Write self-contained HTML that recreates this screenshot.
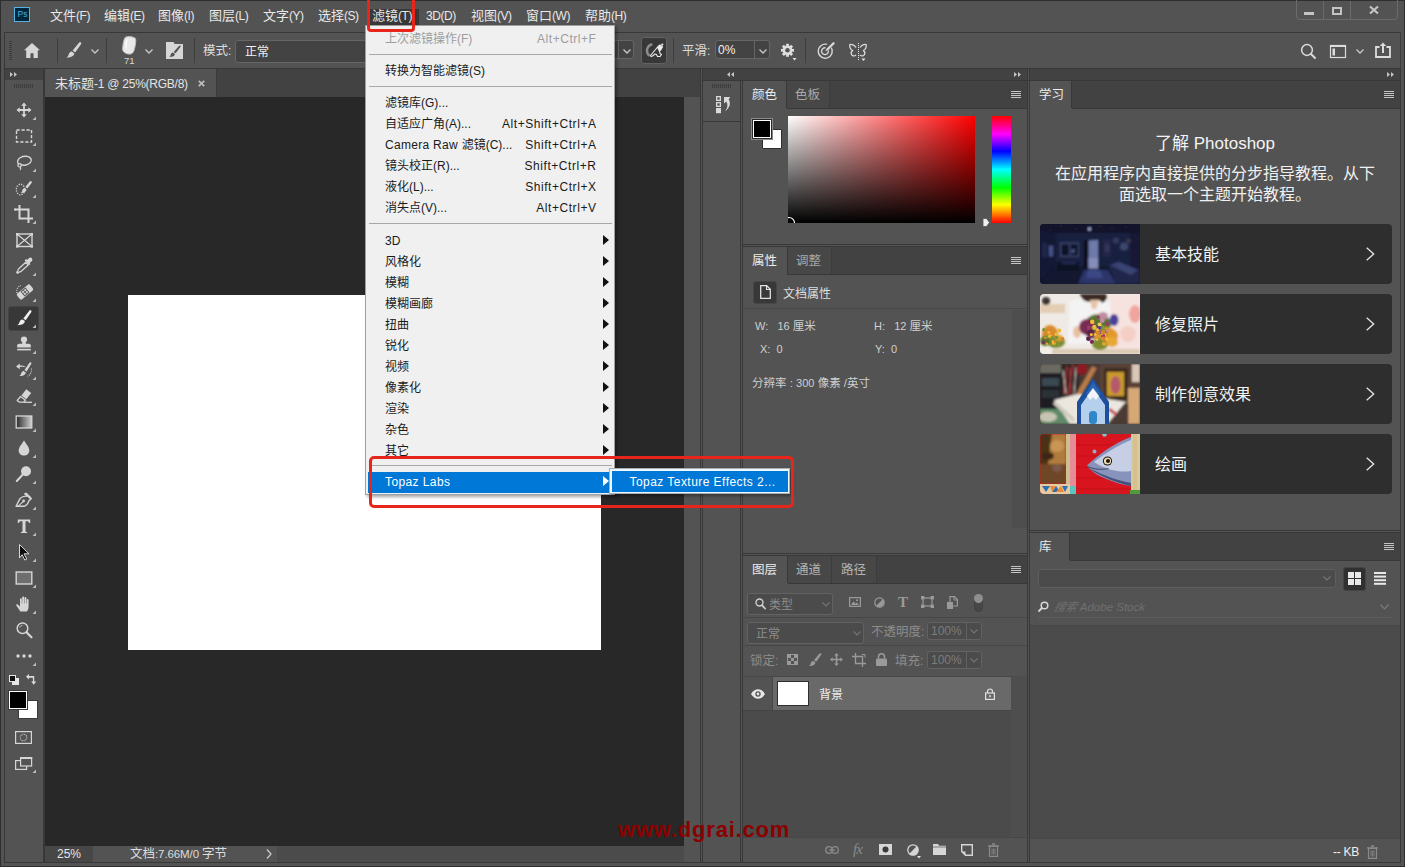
<!DOCTYPE html>
<html lang="zh-CN">
<head>
<meta charset="utf-8">
<title>Photoshop</title>
<style>
*{box-sizing:border-box;margin:0;padding:0}
html,body{width:1405px;height:867px;overflow:hidden;background:#535353}
body{position:relative;font-family:"Liberation Sans","Noto Sans CJK SC",sans-serif;font-size:12px;color:#dcdcdc;line-height:1}
.a{position:absolute}
.t{position:absolute;white-space:nowrap}
svg{position:absolute;overflow:visible}
/* frame */
#frame{left:0;top:0;width:1405px;height:867px;background:#535353;border:1px solid #2e2e2e}
#menubar{left:1px;top:1px;width:1403px;height:31px;background:#535353}
#optline{left:4px;top:32px;width:1397px;height:1px;background:#383838}
#optbar{left:4px;top:33px;width:1397px;height:36px;background:#535353;border-left:1px solid #383838;border-right:1px solid #3f3f3f;border-bottom:1px solid #383838}
.sep{position:absolute;top:38px;width:1px;height:25px;background:#3e3e3e}
.chev{stroke:#c8c8c8;stroke-width:1.3;fill:none}
.ic{fill:#d6d6d6}
.dd{position:absolute;background:#434343;border:1px solid #666;border-radius:3px}
.mi{position:absolute;top:8px;font-size:13px;line-height:15px;color:#e8e8e8;white-space:nowrap}
.mi .l{font-size:12px;letter-spacing:-0.45px}
/* left toolbar */
#tools{left:5px;top:69px;width:38px;height:793px;background:#535353}
#toolshead{left:5px;top:69px;width:38px;height:11px;background:#424242}
/* doc area */
#tabstrip{left:45px;top:69px;width:655px;height:29px;background:#424242}
#doctab{left:45px;top:69px;width:171px;height:29px;background:#535353}
#canvas{left:45px;top:97px;width:639px;height:749px;background:#282828}
#vscroll{left:684px;top:97px;width:16px;height:749px;background:#535353}
#doc{left:128px;top:295px;width:473px;height:355px;background:#fff}
#status{left:45px;top:846px;width:655px;height:16px;background:#4b4b4b}
/* panels */
.phead{position:absolute;background:#424242}
.ptab{position:absolute;background:#535353;color:#e8e8e8;font-size:13px}
.panel{position:absolute;background:#535353}
#fmenu .mt{position:absolute;left:19px;font-size:12px;line-height:16px;white-space:nowrap}
#fmenu .ms{position:absolute;right:17.5px;font-size:12px;line-height:16px;white-space:nowrap;letter-spacing:.55px}
#fmenu .l{font-size:12px}
</style>
</head>
<body>
<div class="a" id="frame"></div>
<div class="a" id="menubar"></div>
<div class="a" id="optline"></div>
<div class="a" id="optbar"></div>
<div class="a" id="tools"></div>
<div class="a" id="toolshead"></div>
<div class="a" id="tabstrip"></div>
<div class="a" id="doctab"></div>
<div class="a" id="canvas"></div>
<div class="a" id="vscroll"></div>
<div class="a" id="doc"></div>
<div class="a" id="status"></div>
<!--MENUBAR-->
<div class="a" style="left:14px;top:7px;width:16px;height:15px;background:#00263c;border:1px solid #55b4e4"></div>
<div class="t" style="left:17.500px;top:10px;font-size:8.500px;line-height:9px;color:#45aee6;letter-spacing:0">Ps</div>
<div class="a" style="left:370px;top:9px;width:49px;height:16px;background:#383838"></div>
<div class="mi" style="left:50px">文件<span class="l">(F)</span></div>
<div class="mi" style="left:104px">编辑<span class="l">(E)</span></div>
<div class="mi" style="left:158px">图像<span class="l">(I)</span></div>
<div class="mi" style="left:209px">图层<span class="l">(L)</span></div>
<div class="mi" style="left:263px">文字<span class="l">(Y)</span></div>
<div class="mi" style="left:318px">选择<span class="l">(S)</span></div>
<div class="mi" style="left:372px">滤镜<span class="l">(T)</span></div>
<div class="mi" style="left:426px"><span class="l">3D(D)</span></div>
<div class="mi" style="left:471px">视图<span class="l">(V)</span></div>
<div class="mi" style="left:526px">窗口<span class="l">(W)</span></div>
<div class="mi" style="left:585px">帮助<span class="l">(H)</span></div>
<div class="a" style="left:1296px;top:-4px;width:102px;height:24px;border:1px solid #6b6b6b;border-radius:4px"></div>
<div class="a" style="left:1323px;top:1px;width:1px;height:18px;background:#6b6b6b"></div>
<div class="a" style="left:1350px;top:1px;width:1px;height:18px;background:#6b6b6b"></div>
<div class="a" style="left:1304px;top:12px;width:10px;height:3px;background:#c4c4c4"></div>
<div class="a" style="left:1332px;top:7px;width:10px;height:8px;border:2px solid #c4c4c4"></div>
<svg style="left:1369px;top:6px" width="10" height="8" viewBox="0 0 10 8"><path d="M1 0.5L9 7.5M9 0.5L1 7.5" stroke="#c4c4c4" stroke-width="2.2" fill="none"/></svg>
<!--OPTBAR-->
<div class="a" style="left:9px;top:41px;width:3px;height:20px;background:repeating-linear-gradient(to bottom,#3c3c3c 0 1px,transparent 1px 2px)"></div>
<svg style="left:24px;top:43px" width="16" height="15" viewBox="0 0 16 15"><path class="ic" d="M8 0L0 7.2h2.2V15h4.3v-4.8h3V15h4.3V7.2H16z"/></svg>
<div class="sep" style="left:57px"></div>
<svg style="left:66px;top:42px" width="16" height="16" viewBox="0 0 16 16"><path class="ic" d="M14.6 0.3c0.8 0.5 0.9 1.2 0.4 2L9.2 10.4 6.6 8.6 13 0.7c0.5-0.6 1-0.8 1.6-0.4zM5.7 9.5l2.6 1.8c-0.3 2.6-2.6 4.3-7.9 4.2 1.6-0.8 1.9-1.6 2.3-3.2 0.4-1.5 1.5-2.6 3-2.8z"/></svg>
<svg style="left:91px;top:49px" width="8" height="5" viewBox="0 0 8 5"><path class="chev" d="M0.5 0.5L4 4l3.5-3.5"/></svg>
<div class="sep" style="left:106px"></div>
<svg style="left:120px;top:36px" width="17" height="19" viewBox="0 0 17 19"><path d="M5.5 1.2C8 0 13 0.6 15.2 2.2c1.2 1 0.3 7.8-1.2 12.3-0.8 2.5-2.6 3.8-5 3.6-3.6-0.3-6.6-2.6-6.4-5.2C2.9 9 3.6 3 5.5 1.2z" fill="#e9e9e9" stroke="#bdbdbd" stroke-width="1"/><path d="M7 3.5c-0.8 3-1.3 6-1.2 9" stroke="#fff" stroke-width="1.5" fill="none" opacity=".8"/></svg>
<div class="t" style="left:124px;top:56px;font-size:9.5px;color:#d8d8d8">71</div>
<svg style="left:145px;top:49px" width="8" height="5" viewBox="0 0 8 5"><path class="chev" d="M0.5 0.5L4 4l3.5-3.5"/></svg>
<svg style="left:166px;top:42px" width="17" height="17" viewBox="0 0 17 17"><path class="ic" d="M0 0h7.5l1.2 2H17v15H0z"/><path d="M14.2 3.6c0.6 0.4 0.6 0.9 0.2 1.5L9.6 11.2 7.7 9.9 12.9 4c0.4-0.5 0.8-0.7 1.3-0.4zM7 10.6l1.9 1.3c-0.3 1.9-2 3-5.8 2.9 1.2-0.5 1.4-1.1 1.7-2.2 0.3-1.1 1.1-1.8 2.2-2z" fill="#535353"/></svg>
<div class="sep" style="left:194px"></div>
<div class="t" style="left:203px;top:44px;font-size:12.500px;line-height:15px;color:#dcdcdc">模式<span style="font-size:12px">:</span></div>
<div class="dd" style="left:235px;top:40px;width:150px;height:23px"></div>
<div class="t" style="left:245px;top:45px;font-size:12px;line-height:14px;color:#f0f0f0">正常</div>
<div class="dd" style="left:600px;top:40px;width:34px;height:19px"></div>
<div class="a" style="left:618px;top:41px;width:1px;height:17px;background:#666"></div>
<svg style="left:623px;top:49px" width="8" height="5" viewBox="0 0 8 5"><path class="chev" d="M0.5 0.5L4 4l3.5-3.5"/></svg>
<div class="a" style="left:641px;top:37px;width:26px;height:27px;background:#383838;border:1px solid #626262;border-radius:3px"></div>
<svg style="left:645px;top:42px" width="19" height="17" viewBox="0 0 19 17"><path d="M7.300 2.300C1.800 3.800 0 10 4.600 13.800" stroke="#8c8c8c" stroke-width="2.500" fill="none"/><path d="M5.500 13.500L13 4.500 15 3l2.500 2-1.500 2.500L14.500 9l0.500 2.500 1.500 1-1.500 2h-2.500l-1-2L10 12l-2.500 2-1.500 0.500z" fill="#383838" stroke="#ececec" stroke-width="1.100" stroke-linejoin="round"/><path d="M12 5.500L15 3l2.500 2L16 7.500 14 9.500z" fill="#ececec"/><circle cx="17.300" cy="2.600" r="1.100" fill="#ececec"/></svg>
<div class="sep" style="left:673px"></div>
<div class="t" style="left:682px;top:44px;font-size:12.500px;line-height:15px;color:#dcdcdc">平滑<span style="font-size:12px">:</span></div>
<div class="dd" style="left:715px;top:40px;width:55px;height:19px"></div>
<div class="a" style="left:754px;top:41px;width:1px;height:17px;background:#666"></div>
<div class="t" style="left:718px;top:43px;font-size:12px;line-height:14px;color:#f0f0f0">0%</div>
<svg style="left:759px;top:49px" width="8" height="5" viewBox="0 0 8 5"><path class="chev" d="M0.5 0.5L4 4l3.5-3.5"/></svg>
<svg style="left:780px;top:43px" width="17" height="18" viewBox="0 0 17 18"><g transform="translate(7.500 7.300) scale(.93)"><g fill="#dedede"><rect x="-1.5" y="-7" width="3" height="14"/><rect x="-1.5" y="-7" width="3" height="14" transform="rotate(45)"/><rect x="-1.5" y="-7" width="3" height="14" transform="rotate(90)"/><rect x="-1.5" y="-7" width="3" height="14" transform="rotate(135)"/><circle r="5.2"/></g><circle r="2.4" fill="#535353"/></g><path d="M12.5 15h4l-2 2.5z" fill="#e6e6e6"/></svg>
<div class="sep" style="left:805px"></div>
<svg style="left:817px;top:41px" width="19" height="18" viewBox="0 0 19 18"><g fill="none" stroke="#d8d8d8" stroke-width="1.4"><path d="M14.2 6.4A7 7 0 1 1 10 3.4"/><path d="M11 8.6A3.4 3.4 0 1 1 8.4 6.8"/></g><path d="M8 10.5l1-2.6 6.6-6.6c0.6-0.6 1.4-0.5 1.9 0s0.6 1.3 0 1.9L10.9 9.8z" fill="#d8d8d8" stroke="#535353" stroke-width=".6"/></svg>
<svg style="left:849px;top:43px" width="18" height="18" viewBox="0 0 18 18"><g fill="none" stroke="#d8d8d8" stroke-width="1.3" stroke-linejoin="round"><path d="M7 4.5C5.5 2 2.5 0.8 0.8 1.6 0.6 4 1.6 6.6 3.6 7.6 2.2 8.4 1.8 10 2.6 11.6c1 1.6 3.2 1.8 4.4 0.2"/><path d="M11 4.5c1.5-2.5 4.5-3.700 6.200-2.900 0.200 2.400-0.800 5-2.800 6 1.400 0.800 1.800 2.400 1 4-1 1.600-3.200 1.800-4.400 0.200"/></g><path d="M9.500 0v17" stroke="#e6e6e6" stroke-width="1" stroke-dasharray="1 1"/><path d="M12.500 15.500h4l-2 2.500z" fill="#e6e6e6"/></svg>
<svg style="left:1300px;top:43px" width="16" height="16" viewBox="0 0 16 16"><circle cx="7" cy="7" r="5.4" fill="none" stroke="#dcdcdc" stroke-width="1.5"/><path d="M11 11l4 4" stroke="#dcdcdc" stroke-width="2" stroke-linecap="round"/></svg>
<svg style="left:1330px;top:45px" width="16" height="13" viewBox="0 0 16 13"><rect x=".5" y=".5" width="15" height="12" fill="none" stroke="#dcdcdc" stroke-width="1.2"/><rect x="0" y="0" width="16" height="2" fill="#dcdcdc"/><rect x="2.500" y="3.500" width="2.500" height="7" fill="#dcdcdc"/></svg>
<svg style="left:1356px;top:49px" width="8" height="5" viewBox="0 0 8 5"><path class="chev" d="M0.5 0.5L4 4l3.5-3.5"/></svg>
<svg style="left:1375px;top:42px" width="16" height="16" viewBox="0 0 16 16"><path d="M4.500 5H1v10h14V5h-3.500" fill="none" stroke="#dcdcdc" stroke-width="1.800"/><path d="M8 11V2.500" stroke="#dcdcdc" stroke-width="2"/><path d="M4.800 4L8 0.400 11.200 4z" fill="#dcdcdc"/></svg>
<!--TOOLS-->
<div class="a" style="left:4px;top:69px;width:1px;height:794px;background:#383838"></div><div class="a" style="left:43px;top:69px;width:1px;height:794px;background:#383838"></div><div class="a" style="left:5px;top:862px;width:1396px;height:1px;background:#383838"></div>
<svg style="left:9px;top:71px" width="9" height="7" viewBox="0 0 9 7"><path d="M1 1L4 3.500 1 6zM5 1L8 3.500 5 6z" fill="#c4c4c4"/></svg>
<div class="a" style="left:14px;top:84px;width:19px;height:4px;background:repeating-linear-gradient(to right,#3c3c3c 0 1px,transparent 1px 2px)"></div>
<div class="a" style="left:8px;top:306px;width:31px;height:25px;background:#383838;border:1px solid #444;border-radius:3px"></div>
<svg style="left:14px;top:100px" width="20" height="20" viewBox="0 0 20 20"><path d="M10 2.5l2.800 3.200h-1.900v3.400h3.400v-1.900l3.200 2.800-3.200 2.800v-1.900h-3.400v3.400h1.900L10 17.500l-2.800-3.200h1.900v-3.400H5.700v1.900L2.500 10l3.200-2.800v1.900h3.400V5.700H7.200z" fill="#d6d6d6"/><path d="M22 16.500v3.500h-3.500z" fill="#bdbdbd"/></svg>
<svg style="left:14px;top:126px" width="20" height="20" viewBox="0 0 20 20"><rect x="2.500" y="4" width="15" height="12" fill="none" stroke="#d6d6d6" stroke-width="1.400" stroke-dasharray="3.200 1.800"/><path d="M22 16.500v3.500h-3.500z" fill="#bdbdbd"/></svg>
<svg style="left:14px;top:152px" width="20" height="20" viewBox="0 0 20 20"><path d="M5 12.500C2.800 11 3 7.500 6.500 5.500c3.500-2 8.500-1.500 10.300 1 1.700 2.500-0.800 5.800-5 6.500-1.800 0.300-3.600 0.200-5-0.300" fill="none" stroke="#d6d6d6" stroke-width="1.400"/><circle cx="5.600" cy="13.300" r="1.700" fill="none" stroke="#d6d6d6" stroke-width="1.200"/><path d="M6.300 14.800c0.600 1 0.600 2-0.300 3" fill="none" stroke="#d6d6d6" stroke-width="1.200"/><path d="M22 16.500v3.500h-3.500z" fill="#bdbdbd"/></svg>
<svg style="left:14px;top:178px" width="20" height="20" viewBox="0 0 20 20"><ellipse cx="6.500" cy="11.500" rx="4.200" ry="5.300" fill="none" stroke="#d6d6d6" stroke-width="1.300" stroke-dasharray="1.200 1.300"/><path d="M17.300 3.200c0.700 0.500 0.700 1.100 0.300 1.700l-4.300 5.700-2-1.500 4.500-5.600c0.400-0.500 0.900-0.700 1.500-0.300zM10.500 9.900l2 1.500c-0.300 2.200-2 3.700-6 3.600 1.300-0.700 1.500-1.300 1.800-2.600 0.300-1.300 1-2.200 2.200-2.500z" fill="#d6d6d6"/><path d="M22 16.500v3.500h-3.500z" fill="#bdbdbd"/></svg>
<svg style="left:14px;top:204px" width="20" height="20" viewBox="0 0 20 20"><path d="M5.500 1v13.500H19M1 5.500h13.500V19" fill="none" stroke="#d6d6d6" stroke-width="2"/><rect x="0" y="4.500" width="2" height="2" fill="#d6d6d6"/><path d="M22 16.500v3.500h-3.500z" fill="#bdbdbd"/></svg>
<svg style="left:14px;top:230px" width="20" height="20" viewBox="0 0 20 20"><rect x="3" y="4" width="15" height="12.500" fill="none" stroke="#d6d6d6" stroke-width="1.400"/><path d="M3 4l15 12.500M18 4L3 16.500" stroke="#d6d6d6" stroke-width="1.200"/><g fill="#d6d6d6"><rect x="2" y="3" width="2.400" height="2.400"/><rect x="16.600" y="3" width="2.400" height="2.400"/><rect x="2" y="15.200" width="2.400" height="2.400"/><rect x="16.600" y="15.200" width="2.400" height="2.400"/></g></svg>
<svg style="left:14px;top:256px" width="20" height="20" viewBox="0 0 20 20"><path d="M14.800 2.200c1.200-1 2.600-0.600 3.200 0.300 0.600 0.900 0.500 2-0.500 2.900l-1.900 1.600 0.900 1-1.500 1.300-4.400-5.100 1.500-1.300 0.900 1z" fill="#d6d6d6"/><path d="M11.800 6.300l2.400 2.800-6.700 5.900c-0.800 0.700-1.700 1.100-2.700 1.200l-1.200 1-0.900-1 1.100-1.100c0-1 0.400-2 1.200-2.700z" fill="none" stroke="#d6d6d6" stroke-width="1.300" stroke-linejoin="round"/><path d="M22 16.500v3.500h-3.500z" fill="#bdbdbd"/></svg>
<svg style="left:14px;top:282px" width="20" height="20" viewBox="0 0 20 20"><g transform="rotate(-40 11 10)"><rect x="2.500" y="6.200" width="17" height="7.600" rx="2" fill="#d6d6d6"/><rect x="7.800" y="6.800" width="6.400" height="6.400" fill="#535353"/><g fill="#d6d6d6"><rect x="8.700" y="7.700" width="1.900" height="1.900"/><rect x="11.400" y="7.700" width="1.900" height="1.900"/><rect x="8.700" y="10.400" width="1.900" height="1.900"/><rect x="11.400" y="10.400" width="1.900" height="1.900"/></g></g><path d="M3 11C2 8 3.500 4.500 7 3.500" fill="none" stroke="#d6d6d6" stroke-width="1.200" stroke-dasharray="1 1.200"/><path d="M22 16.500v3.500h-3.500z" fill="#bdbdbd"/></svg>
<svg style="left:14px;top:308px" width="20" height="20" viewBox="0 0 20 20"><path d="M16.800 2.300c0.800 0.500 0.900 1.200 0.400 2L11.700 12.200 9.300 10.500 15.300 2.700c0.400-0.600 0.900-0.800 1.500-0.400zM8.400 11.400l2.500 1.700c-0.300 2.500-2.500 4.200-7.600 4.100 1.600-0.800 1.800-1.600 2.200-3.100 0.400-1.500 1.400-2.500 2.900-2.700z" fill="#f0f0f0"/><path d="M22 16.500v3.500h-3.500z" fill="#bdbdbd"/></svg>
<svg style="left:14px;top:334px" width="20" height="20" viewBox="0 0 20 20"><path d="M10 2.500c1.900 0 3.200 1.300 3.200 2.900 0 1.200-0.800 2-1.300 2.800-0.400 0.700-0.300 1.400 0.300 1.600h2.600c1.200 0 2 0.700 2 1.800v1.900H3.200v-1.900c0-1.100 0.800-1.800 2-1.800h2.600c0.600-0.200 0.700-0.900 0.300-1.600-0.500-0.800-1.300-1.600-1.300-2.800 0-1.600 1.300-2.900 3.200-2.900z" fill="#d6d6d6"/><rect x="3.200" y="14.800" width="13.600" height="1.600" fill="#d6d6d6"/><path d="M22 16.500v3.500h-3.500z" fill="#bdbdbd"/></svg>
<svg style="left:14px;top:360px" width="20" height="20" viewBox="0 0 20 20"><path d="M16.800 2.300c0.700 0.500 0.800 1.100 0.400 1.800L12.600 11.600 10.500 10.100 15.500 2.700c0.400-0.500 0.800-0.700 1.300-0.400zM9.700 10.900l2.100 1.500c-0.300 2.200-2.100 3.600-6.400 3.500 1.300-0.700 1.500-1.400 1.800-2.600 0.300-1.300 1.200-2.200 2.500-2.400z" fill="#d6d6d6"/><path d="M2 6.500l3.800-3v2c2.500-0.200 4.800 0.500 6 1.800-2-0.800-4-0.800-6-0.400v2.400z" fill="#d6d6d6"/><path d="M17.300 8.500c0.700 3.300-0.800 6.400-3.800 7.800" fill="none" stroke="#d6d6d6" stroke-width="1.100" stroke-dasharray="1 1.200"/><path d="M22 16.500v3.500h-3.500z" fill="#bdbdbd"/></svg>
<svg style="left:14px;top:386px" width="20" height="20" viewBox="0 0 20 20"><path d="M12.300 3.300l4.900 3.700-4.900 6.300-4.900-3.700z" fill="#d6d6d6"/><path d="M6.600 10.500l4.900 3.700-1.700 2H5.500l-2.300-1.800z" fill="none" stroke="#d6d6d6" stroke-width="1.300" stroke-linejoin="round"/><path d="M9.500 16.300H18" stroke="#d6d6d6" stroke-width="1.300"/><path d="M22 16.500v3.500h-3.500z" fill="#bdbdbd"/></svg>
<svg style="left:14px;top:412px" width="20" height="20" viewBox="0 0 20 20"><defs><linearGradient id="tg" x1="0" x2="1"><stop offset="0" stop-color="#2a2a2a"/><stop offset="1" stop-color="#d0d0d0"/></linearGradient></defs><rect x="2.200" y="4" width="15.600" height="12" fill="url(#tg)" stroke="#d6d6d6" stroke-width="1.300"/><path d="M22 16.500v3.500h-3.500z" fill="#bdbdbd"/></svg>
<svg style="left:14px;top:438px" width="20" height="20" viewBox="0 0 20 20"><path d="M10 2.500c2.300 3.800 5.300 6.400 5.300 10 0 3-2.400 5-5.300 5s-5.300-2-5.300-5c0-3.600 3-6.200 5.300-10z" fill="#d6d6d6"/><path d="M22 16.500v3.500h-3.500z" fill="#bdbdbd"/></svg>
<svg style="left:14px;top:464px" width="20" height="20" viewBox="0 0 20 20"><circle cx="12" cy="7.200" r="5" fill="#d6d6d6"/><path d="M8.600 10.800L2.800 17" stroke="#d6d6d6" stroke-width="2" stroke-linecap="round"/><path d="M22 16.500v3.500h-3.500z" fill="#bdbdbd"/></svg>
<svg style="left:14px;top:490px" width="20" height="20" viewBox="0 0 20 20"><path d="M11.500 3.200l5.500 4.500-2 2.200c-0.400 3-1.500 5-4 6.300L3 17.300 5.800 9.200c1.500-2.200 3.400-3.200 6.400-3.400z" fill="none" stroke="#d6d6d6" stroke-width="1.400" stroke-linejoin="round" transform="rotate(8 10 10)"/><path d="M3.500 16.800l5.300-5" stroke="#d6d6d6" stroke-width="1.100"/><circle cx="9.600" cy="11" r="1.400" fill="#d6d6d6"/><path d="M11.300 2.400l6.200 5-1.400 1.600-6.200-5z" fill="#d6d6d6"/><path d="M22 16.500v3.500h-3.500z" fill="#bdbdbd"/></svg>
<svg style="left:14px;top:516px" width="20" height="20" viewBox="0 0 20 20"><path d="M3.800 3.500h12.400v3.600h-1.200c-0.200-1.300-0.700-1.800-2-1.800h-1.500v9.400c0 0.900 0.400 1.200 1.600 1.300v1H6.900v-1c1.200-0.100 1.600-0.400 1.600-1.300V5.300H7c-1.300 0-1.800 0.500-2 1.800H3.800z" fill="#d6d6d6"/><path d="M22 16.500v3.500h-3.500z" fill="#bdbdbd"/></svg>
<svg style="left:14px;top:542px" width="20" height="20" viewBox="0 0 20 20"><path d="M5.500 2.500l9.500 9.300h-5l2.800 5.300-2 1-2.700-5.400-2.600 3.300z" fill="#0c0c0c" stroke="#d6d6d6" stroke-width="1"/><path d="M22 16.500v3.500h-3.500z" fill="#bdbdbd"/></svg>
<svg style="left:14px;top:568px" width="20" height="20" viewBox="0 0 20 20"><rect x="2.200" y="4" width="15.600" height="12" fill="#6e6e6e" stroke="#d6d6d6" stroke-width="1.400"/><path d="M22 16.500v3.500h-3.500z" fill="#bdbdbd"/></svg>
<svg style="left:14px;top:594px" width="20" height="20" viewBox="0 0 20 20"><path d="M6.300 17.500C4.800 15.300 3.600 13.400 2.300 11.600c-0.500-0.800 0.500-1.800 1.500-1.100l2.200 1.900V5.200c0-1.200 1.800-1.200 1.800 0V9.500h0.400V3.300c0-1.200 1.900-1.200 1.900 0v6.200h0.400V3.900c0-1.200 1.900-1.200 1.900 0v5.600h0.400V5.800c0-1.200 1.800-1.200 1.800 0v6.600c0 2.400-0.900 3.800-1.700 5.100z" fill="#d6d6d6"/><path d="M22 16.500v3.500h-3.500z" fill="#bdbdbd"/></svg>
<svg style="left:14px;top:620px" width="20" height="20" viewBox="0 0 20 20"><circle cx="8.500" cy="8.300" r="5.300" fill="none" stroke="#d6d6d6" stroke-width="1.500"/><path d="M12.500 12.300l5 5" stroke="#d6d6d6" stroke-width="2.200" stroke-linecap="round"/><path d="M5.800 7.500c0.400-1.300 1.400-2.100 2.700-2.300" stroke="#d6d6d6" stroke-width="1" fill="none"/></svg>
<svg style="left:14px;top:646px" width="20" height="20" viewBox="0 0 20 20"><circle cx="4" cy="10" r="1.700" fill="#d6d6d6"/><circle cx="10" cy="10" r="1.700" fill="#d6d6d6"/><circle cx="16" cy="10" r="1.700" fill="#d6d6d6"/><path d="M22 16.500v3.500h-3.500z" fill="#bdbdbd"/></svg>
<div class="a" style="left:12px;top:678px;width:7px;height:7px;background:#e6e6e6"></div><div class="a" style="left:9px;top:675px;width:7px;height:7px;background:#111;border:1px solid #e6e6e6"></div>
<svg style="left:26px;top:674px" width="11" height="11" viewBox="0 0 11 11"><path d="M0 2.800L3 0v2h5.200v5.400h2L7.700 10.800 5.200 7.400h1.700V3.700H3v1.900z" fill="#dcdcdc"/></svg>
<div class="a" style="left:18px;top:700px;width:20px;height:19px;background:#fff;border:1px solid #3a3a3a"></div>
<div class="a" style="left:9px;top:691px;width:18px;height:18px;background:#000;border:1px solid #fff;outline:1px solid #3a3a3a"></div>
<svg style="left:15px;top:731px" width="17" height="13" viewBox="0 0 17 13"><rect x=".600" y=".600" width="15.800" height="11.800" fill="none" stroke="#d6d6d6" stroke-width="1.200"/><circle cx="8.500" cy="6.500" r="3.300" fill="none" stroke="#d6d6d6" stroke-width="1.100" stroke-dasharray="1 1"/></svg>
<svg style="left:15px;top:757px" width="22" height="17" viewBox="0 0 22 17"><rect x=".600" y="3.600" width="11" height="8.800" fill="none" stroke="#d6d6d6" stroke-width="1.200"/><rect x="5.600" y=".600" width="11" height="8.400" fill="#535353" stroke="#d6d6d6" stroke-width="1.200"/><rect x="5" y="0" width="12.200" height="2" fill="#d6d6d6"/><path d="M21 12.500V16h-3.500z" fill="#bdbdbd"/></svg>
<!--DOCTAB-->
<div class="a" style="left:44px;top:69px;width:1px;height:794px;background:#383838"></div>
<div class="a" style="left:216px;top:69px;width:1px;height:29px;background:#3a3a3a"></div>
<div class="t" style="left:55px;top:76px;font-size:13px;line-height:15px;color:#e4e4e4">未标题<span style="font-size:12px;letter-spacing:-0.250px">-1 @ 25%(RGB/8)</span></div>
<svg style="left:198px;top:80px" width="7" height="7" viewBox="0 0 7 7"><path d="M0.800 0.800L6.200 6.200M6.200 0.800L0.800 6.200" stroke="#bdbdbd" stroke-width="1.700"/></svg>
<div class="a" style="left:45px;top:846px;width:48px;height:16px;background:#474747"></div>
<div class="a" style="left:93px;top:846px;width:184px;height:16px;background:#535353"></div>
<div class="t" style="left:57px;top:848px;font-size:12px;line-height:13px;color:#e6e6e6">25%</div>
<div class="t" style="left:130px;top:847px;font-size:12.500px;line-height:14px;color:#dcdcdc">文档<span style="font-size:11.500px;letter-spacing:-0.100px">:7.66M/0 </span>字节</div>
<svg style="left:266px;top:849px" width="6" height="10" viewBox="0 0 6 10"><path d="M1 0.500L5 5 1 9.500" class="chev"/></svg>
<div class="a" style="left:684px;top:846px;width:16px;height:16px;background:#535353"></div>
<div class="a" style="left:700px;top:69px;width:1px;height:794px;background:#383838"></div>
<div class="a" style="left:702px;top:69px;width:1px;height:794px;background:#383838"></div>
<!--PANELS-->
<div class="phead" style="left:703px;top:69px;width:325px;height:11px"></div>
<div class="a" style="left:703px;top:80px;width:698px;height:1px;background:#383838"></div>
<svg style="left:726px;top:71px" width="9" height="7" viewBox="0 0 9 7"><path d="M4 1L1 3.500 4 6zM8 1L5 3.500 8 6z" fill="#c4c4c4"/></svg>
<svg style="left:1013px;top:71px" width="9" height="7" viewBox="0 0 9 7"><path d="M1 1L4 3.500 1 6zM5 1L8 3.500 5 6z" fill="#c4c4c4"/></svg>
<div class="a" style="left:712px;top:84px;width:19px;height:4px;background:repeating-linear-gradient(to right,#3c3c3c 0 1px,transparent 1px 2px)"></div>
<div class="a" style="left:703px;top:121px;width:38px;height:1px;background:#383838"></div>
<div class="a" style="left:740px;top:81px;width:1px;height:782px;background:#383838"></div>
<div class="a" style="left:742px;top:81px;width:1px;height:782px;background:#383838"></div>
<svg style="left:716px;top:96px" width="15" height="18" viewBox="0 0 15 18"><g fill="none" stroke="#dadada" stroke-width="1.300"><rect x=".650" y=".650" width="3.700" height="3.700"/><rect x=".650" y="6.650" width="3.700" height="3.700"/></g><rect x="0" y="12" width="5" height="5.200" fill="#dadada"/><path d="M8 1h6.300l-1.600 2.200c2.300 3.600 1.300 8.800-3.700 12 2.800-3.300 3.200-6.600 1.200-9.600L8 7.500z" fill="#dadada"/></svg>
<!-- color panel -->
<div class="phead" style="left:743px;top:81px;width:285px;height:28px"></div>
<div class="a" style="left:787px;top:81px;width:43px;height:27px;background:#474747;border-right:1px solid #3c3c3c"></div>
<div class="a" style="left:743px;top:108px;width:285px;height:1px;background:#383838"></div>
<div class="ptab" style="left:743px;top:81px;width:44px;height:28px"></div>
<div class="a" style="left:786px;top:81px;width:1px;height:27px;background:#383838"></div>
<div class="t" style="left:752px;top:87.600px;font-size:12.500px;line-height:15px;color:#ececec">颜色</div>
<div class="t" style="left:795px;top:87.600px;font-size:12.500px;line-height:15px;color:#a8a8a8">色板</div>
<div class="a" style="left:1011px;top:91px;width:10px;height:7px;background:repeating-linear-gradient(to bottom,#c4c4c4 0 1px,transparent 1px 2px)"></div>
<div class="a" style="left:762px;top:129px;width:20px;height:20px;background:#fff;border:1px solid #2e2e2e;border-radius:1px"></div>
<div class="a" style="left:751px;top:118px;width:22px;height:22px;background:#000;border:1px solid #8a8a8a;box-shadow:inset 0 0 0 1px #2a2a2a,inset 0 0 0 2px #fff"></div>
<div class="a" style="left:788px;top:116px;width:187px;height:107px;background:linear-gradient(to top,#000,rgba(0,0,0,0)),linear-gradient(to right,#fff,#f00)"></div>
<svg style="left:788px;top:216px;overflow:hidden" width="8" height="7" viewBox="0 0 8 7"><circle cx="1" cy="7" r="5.500" fill="none" stroke="#fff" stroke-width="1.200"/></svg>
<div class="a" style="left:992px;top:116px;width:19px;height:107px;background:linear-gradient(to bottom,#f00 0%,#f0f 17%,#00f 33%,#0ff 50%,#0f0 67%,#ff0 83%,#f00 100%)"></div>
<svg style="left:982px;top:218px" width="8" height="9" viewBox="0 0 8 9"><path d="M1 0.500h3.500L7.500 4.500 4.500 8.500H1z" fill="#f0f0f0" stroke="#555" stroke-width=".800"/></svg>
<div class="a" style="left:743px;top:244px;width:285px;height:1px;background:#383838"></div>
<div class="a" style="left:743px;top:246px;width:285px;height:1px;background:#383838"></div>
<!-- properties panel -->
<div class="phead" style="left:743px;top:247px;width:285px;height:28px"></div>
<div class="a" style="left:788px;top:247px;width:44px;height:27px;background:#474747;border-right:1px solid #3c3c3c"></div>
<div class="a" style="left:743px;top:274px;width:285px;height:1px;background:#383838"></div>
<div class="ptab" style="left:743px;top:247px;width:44px;height:28px"></div>
<div class="a" style="left:787px;top:247px;width:1px;height:27px;background:#383838"></div>
<div class="t" style="left:752px;top:253.600px;font-size:12.500px;line-height:15px;color:#ececec">属性</div>
<div class="t" style="left:796px;top:253.600px;font-size:12.500px;line-height:15px;color:#a8a8a8">调整</div>
<div class="a" style="left:1011px;top:257px;width:10px;height:7px;background:repeating-linear-gradient(to bottom,#c4c4c4 0 1px,transparent 1px 2px)"></div>
<div class="a" style="left:753px;top:281px;width:24px;height:23px;background:#383838;border:1px solid #464646;border-radius:3px"></div>
<svg style="left:760px;top:285px" width="11" height="14" viewBox="0 0 11 14"><path d="M0.700 0.700h6L10.300 4.300v9H0.700z" fill="none" stroke="#e0e0e0" stroke-width="1.300"/><path d="M6.500 0.700v3.800h3.800" fill="none" stroke="#e0e0e0" stroke-width="1.100"/></svg>
<div class="t" style="left:783px;top:287px;font-size:12px;line-height:15px;color:#dedede">文档属性</div>
<div class="a" style="left:743px;top:308px;width:285px;height:1px;background:#474747"></div>
<div class="a" style="left:1012px;top:310px;width:15px;height:218px;background:#4e4e4e"></div>
<div class="t" style="left:755px;top:320px;font-size:11px;line-height:13px;color:#cfcfcf">W:&nbsp; &nbsp;16 <span style="font-size:11.500px">厘米</span></div>
<div class="t" style="left:874px;top:320px;font-size:11px;line-height:13px;color:#cfcfcf">H:&nbsp; &nbsp;12 <span style="font-size:11.500px">厘米</span></div>
<div class="t" style="left:760px;top:343px;font-size:11px;line-height:13px;color:#cfcfcf">X:&nbsp; 0</div>
<div class="t" style="left:875px;top:343px;font-size:11px;line-height:13px;color:#cfcfcf">Y:&nbsp; 0</div>
<div class="t" style="left:752px;top:377px;font-size:11.500px;line-height:13px;color:#cfcfcf">分辨率 : <span style="font-size:11px">300</span> 像素 /英寸</div>
<div class="a" style="left:743px;top:553px;width:285px;height:1px;background:#383838"></div>
<div class="a" style="left:743px;top:555px;width:285px;height:1px;background:#383838"></div>
<!-- layers panel -->
<div class="phead" style="left:743px;top:556px;width:285px;height:28px"></div>
<div class="a" style="left:788px;top:556px;width:44px;height:27px;background:#474747;border-right:1px solid #3c3c3c"></div>
<div class="a" style="left:832px;top:556px;width:45px;height:27px;background:#474747;border-right:1px solid #3c3c3c"></div>
<div class="a" style="left:743px;top:583px;width:285px;height:1px;background:#383838"></div>
<div class="ptab" style="left:743px;top:556px;width:45px;height:28px"></div>
<div class="a" style="left:787px;top:556px;width:1px;height:27px;background:#383838"></div>
<div class="t" style="left:752px;top:562.600px;font-size:12.500px;line-height:15px;color:#ececec">图层</div>
<div class="t" style="left:796px;top:562.600px;font-size:12.500px;line-height:15px;color:#b4b4b4">通道</div>
<div class="t" style="left:841px;top:562.600px;font-size:12.500px;line-height:15px;color:#b4b4b4">路径</div>
<div class="a" style="left:1011px;top:566px;width:10px;height:7px;background:repeating-linear-gradient(to bottom,#c4c4c4 0 1px,transparent 1px 2px)"></div>
<div class="a" style="left:747px;top:593px;width:86px;height:22px;background:#4b4b4b;border:1px solid #626262;border-radius:3px"></div>
<svg style="left:755px;top:598px" width="11" height="12" viewBox="0 0 11 12"><circle cx="4.500" cy="4.500" r="3.500" fill="none" stroke="#cfcfcf" stroke-width="1.400"/><path d="M7 7.200l3 3.300" stroke="#cfcfcf" stroke-width="1.800" stroke-linecap="round"/></svg>
<div class="t" style="left:769px;top:598px;font-size:12px;line-height:14px;color:#8c8c8c">类型</div>
<svg style="left:822px;top:602px" width="8" height="5" viewBox="0 0 8 5"><path d="M0.500 0.500L4 4l3.500-3.500" fill="none" stroke="#747474" stroke-width="1.200"/></svg>
<svg style="left:849px;top:597px" width="12" height="10" viewBox="0 0 12 10"><rect x=".600" y=".600" width="10.800" height="8.800" fill="none" stroke="#9a9a9a" stroke-width="1.200"/><path d="M2 8l2.500-3.500 2 2.300 1.300-1.300L10 8z" fill="#9a9a9a"/><circle cx="8" cy="3.200" r="1" fill="#9a9a9a"/></svg>
<svg style="left:874px;top:597px" width="11" height="11" viewBox="0 0 11 11"><circle cx="5.500" cy="5.500" r="4.700" fill="none" stroke="#9a9a9a" stroke-width="1.200"/><path d="M2.200 8.800A4.700 4.700 0 0 0 8.800 2.200z" fill="#9a9a9a"/></svg>
<div class="t" style="left:898px;top:595px;font-family:'Liberation Serif',serif;font-weight:bold;font-size:15px;line-height:15px;color:#9a9a9a">T</div>
<svg style="left:921px;top:596px" width="13" height="12" viewBox="0 0 13 12"><rect x="2" y="2" width="9" height="8" fill="none" stroke="#9a9a9a" stroke-width="1.200"/><g fill="#9a9a9a"><rect x="0" y="0" width="3.400" height="3.400"/><rect x="9.600" y="0" width="3.400" height="3.400"/><rect x="0" y="8.600" width="3.400" height="3.400"/><rect x="9.600" y="8.600" width="3.400" height="3.400"/></g></svg>
<svg style="left:947px;top:596px" width="11" height="13" viewBox="0 0 11 13"><path d="M3 0.600h4.500L10.400 3.500V10H3z" fill="none" stroke="#9a9a9a" stroke-width="1.200"/><path d="M7 0.600V4h3.400" fill="none" stroke="#9a9a9a" stroke-width="1"/><rect x="0" y="6" width="6" height="7" fill="#9a9a9a"/></svg>
<div class="a" style="left:974px;top:595px;width:9px;height:17px;background:#474747;border:1px solid #404040;border-radius:5px"></div>
<div class="a" style="left:974px;top:594px;width:9px;height:9px;background:#8e8e8e;border-radius:5px"></div>
<div class="a" style="left:743px;top:617px;width:285px;height:1px;background:#474747"></div>
<div class="a" style="left:747px;top:622px;width:117px;height:22px;background:#4b4b4b;border:1px solid #626262;border-radius:3px"></div>
<div class="t" style="left:756px;top:626.500px;font-size:12px;line-height:14px;color:#8c8c8c">正常</div>
<svg style="left:853px;top:631px" width="8" height="5" viewBox="0 0 8 5"><path d="M0.500 0.500L4 4l3.500-3.500" fill="none" stroke="#747474" stroke-width="1.200"/></svg>
<div class="t" style="left:871px;top:625px;font-size:12.500px;line-height:14px;color:#8c8c8c">不透明度<span style="font-size:12px">:</span></div>
<div class="a" style="left:927px;top:622px;width:55px;height:18px;background:#4b4b4b;border:1px solid #626262;border-radius:3px"></div>
<div class="a" style="left:966px;top:623px;width:1px;height:16px;background:#626262"></div>
<div class="t" style="left:931px;top:624px;font-size:12px;line-height:14px;color:#7c7c7c">100%</div>
<svg style="left:970px;top:629px" width="8" height="5" viewBox="0 0 8 5"><path d="M0.500 0.500L4 4l3.500-3.500" fill="none" stroke="#747474" stroke-width="1.200"/></svg>
<div class="a" style="left:743px;top:645px;width:285px;height:1px;background:#474747"></div>
<div class="t" style="left:750px;top:654px;font-size:12.500px;line-height:14px;color:#8c8c8c">锁定<span style="font-size:12px">:</span></div>
<svg style="left:787px;top:654px" width="11" height="11" viewBox="0 0 11 11"><rect x=".500" y=".500" width="10" height="10" fill="none" stroke="#9a9a9a" stroke-width="1"/><g fill="#9a9a9a"><rect x="1" y="1" width="3" height="3"/><rect x="7" y="1" width="3" height="3"/><rect x="4" y="4" width="3" height="3"/><rect x="1" y="7" width="3" height="3"/><rect x="7" y="7" width="3" height="3"/></g></svg>
<svg style="left:808px;top:653px" width="14" height="14" viewBox="0 0 14 14"><path d="M12.800 0.300c0.700 0.500 0.700 1 0.300 1.700L8.200 8.800 6 7.300 11.300 0.700c0.400-0.500 0.900-0.700 1.500-0.400zM5.200 8.100l2.200 1.500c-0.300 2.100-2.200 3.600-6.600 3.500 1.300-0.700 1.600-1.300 1.900-2.600 0.300-1.300 1.200-2.200 2.500-2.400z" fill="#9a9a9a"/></svg>
<svg style="left:830px;top:653px" width="13" height="13" viewBox="0 0 13 13"><path d="M6.500 0l2.300 2.600H7.300v3.100h3.100V4.200L13 6.500l-2.600 2.300V7.300H7.300v3.100h1.500L6.500 13 4.200 10.400h1.500V7.300H2.600v1.500L0 6.500l2.600-2.300v1.500h3.100V2.600H4.200z" fill="#9a9a9a"/></svg>
<svg style="left:852px;top:653px" width="14" height="14" viewBox="0 0 14 14"><path d="M3.500 0v10.500H14M0 3.500h10.500V14" fill="none" stroke="#9a9a9a" stroke-width="1.300"/><path d="M10 1.500h3v3" fill="none" stroke="#9a9a9a" stroke-width="1"/></svg>
<svg style="left:876px;top:653px" width="11" height="13" viewBox="0 0 11 13"><rect x="0" y="5.500" width="11" height="7.500" rx="1" fill="#9a9a9a"/><path d="M2.500 5.500V3.800a3 3 0 0 1 6 0V5.500" fill="none" stroke="#9a9a9a" stroke-width="1.500"/></svg>
<div class="t" style="left:895px;top:654px;font-size:12.500px;line-height:14px;color:#8c8c8c">填充<span style="font-size:12px">:</span></div>
<div class="a" style="left:927px;top:651px;width:55px;height:18px;background:#4b4b4b;border:1px solid #626262;border-radius:3px"></div>
<div class="a" style="left:966px;top:652px;width:1px;height:16px;background:#626262"></div>
<div class="t" style="left:931px;top:653px;font-size:12px;line-height:14px;color:#7c7c7c">100%</div>
<svg style="left:970px;top:658px" width="8" height="5" viewBox="0 0 8 5"><path d="M0.500 0.500L4 4l3.500-3.500" fill="none" stroke="#747474" stroke-width="1.200"/></svg>
<div class="a" style="left:743px;top:676px;width:269px;height:162px;background:#4b4b4b"></div>
<div class="a" style="left:1011px;top:676px;width:16px;height:161px;background:#4e4e4e"></div>
<div class="a" style="left:743px;top:676px;width:269px;height:1px;background:#474747"></div>
<div class="a" style="left:743px;top:677px;width:29px;height:33px;background:#535353"></div>
<div class="a" style="left:772px;top:677px;width:1px;height:33px;background:#474747"></div>
<div class="a" style="left:773px;top:677px;width:238px;height:33px;background:#696969"></div>
<div class="a" style="left:743px;top:710px;width:269px;height:1px;background:#454545"></div>
<svg style="left:751px;top:689px" width="14" height="10" viewBox="0 0 14 10"><path d="M0 5C2 1.800 4.300 0.300 7 0.300S12 1.800 14 5c-2 3.200-4.300 4.700-7 4.700S2 8.200 0 5z" fill="#e6e6e6"/><circle cx="7" cy="5" r="2.700" fill="#535353"/><circle cx="7" cy="5" r="1.400" fill="#e6e6e6"/></svg>
<div class="a" style="left:777px;top:681px;width:32px;height:25px;background:#fff;border:1px solid #2e2e2e"></div>
<div class="t" style="left:819px;top:687.500px;font-size:12px;line-height:14px;color:#f0f0f0">背景</div>
<svg style="left:985px;top:688px" width="10" height="12" viewBox="0 0 10 12"><rect x=".600" y="5" width="8.800" height="6.400" fill="none" stroke="#e0e0e0" stroke-width="1.200"/><path d="M2.500 5V3.500a2.500 2.500 0 0 1 5 0V5" fill="none" stroke="#e0e0e0" stroke-width="1.200"/><rect x="4.200" y="7.200" width="1.600" height="2" fill="#e0e0e0"/></svg>
<div class="a" style="left:743px;top:837px;width:285px;height:1px;background:#474747"></div>
<svg style="left:825px;top:846px" width="14" height="8" viewBox="0 0 14 8"><g fill="none" stroke="#8a8a8a" stroke-width="1.300"><rect x=".700" y=".700" width="6.600" height="6.600" rx="3.300"/><rect x="6.700" y=".700" width="6.600" height="6.600" rx="3.300"/></g><path d="M4 4h6" stroke="#8a8a8a" stroke-width="1.300"/></svg>
<div class="t" style="left:853px;top:842px;font-family:'Liberation Serif',serif;font-style:italic;font-size:15px;line-height:15px;color:#8a8a8a;letter-spacing:-1px">fx</div>
<svg style="left:879px;top:844px" width="13" height="11" viewBox="0 0 13 11"><rect width="13" height="11" fill="#d6d6d6"/><circle cx="6.500" cy="5.500" r="3" fill="#3a3a3a"/></svg>
<svg style="left:907px;top:844px" width="14" height="15" viewBox="0 0 14 15"><circle cx="6" cy="6" r="5.200" fill="none" stroke="#d6d6d6" stroke-width="1.300"/><path d="M2.300 9.700A5.200 5.200 0 0 0 9.700 2.300z" fill="#d6d6d6"/><path d="M10 12h4l-2 2.500z" fill="#e6e6e6"/></svg>
<svg style="left:933px;top:844px" width="13" height="11" viewBox="0 0 13 11"><path d="M0 0h5l1.200 1.800H13V11H0z" fill="#d6d6d6"/><path d="M0 3h13" stroke="#535353" stroke-width=".700"/></svg>
<svg style="left:961px;top:844px" width="12" height="12" viewBox="0 0 12 12"><path d="M0.700 0.700h10.600v10.600H4.500L0.700 7.500z" fill="none" stroke="#d6d6d6" stroke-width="1.400"/><path d="M0.700 7.500h3.800v3.800z" fill="#d6d6d6"/></svg>
<svg style="left:988px;top:843px" width="11" height="14" viewBox="0 0 11 14"><path d="M1.500 3.500h8v9.800h-8z" fill="none" stroke="#8a8a8a" stroke-width="1.200"/><path d="M0 2.800h11M4 1h3" stroke="#8a8a8a" stroke-width="1.300"/><path d="M4 5.500v6M5.500 5.500v6M7 5.500v6" stroke="#8a8a8a" stroke-width=".800"/></svg>
<div class="a" style="left:1027px;top:69px;width:1px;height:794px;background:#383838"></div>
<div class="a" style="left:1029px;top:69px;width:1px;height:794px;background:#383838"></div>
<!--LEARN-->
<svg width="0" height="0" style="left:0;top:0"><defs><filter id="b1" x="-10%" y="-10%" width="120%" height="120%"><feGaussianBlur stdDeviation="0.900"/></filter><filter id="b0" x="-10%" y="-10%" width="120%" height="120%"><feGaussianBlur stdDeviation="0.500"/></filter></defs></svg>
<div class="phead" style="left:1030px;top:69px;width:371px;height:11px"></div>
<svg style="left:1386px;top:71px" width="9" height="7" viewBox="0 0 9 7"><path d="M1 1L4 3.500 1 6zM5 1L8 3.500 5 6z" fill="#c4c4c4"/></svg>
<div class="a" style="left:1400px;top:69px;width:1px;height:794px;background:#383838"></div>
<div class="phead" style="left:1030px;top:81px;width:370px;height:28px"></div>
<div class="a" style="left:1030px;top:108px;width:370px;height:1px;background:#383838"></div>
<div class="ptab" style="left:1030px;top:81px;width:42px;height:28px"></div>
<div class="a" style="left:1071px;top:81px;width:1px;height:27px;background:#383838"></div>
<div class="t" style="left:1039px;top:87.600px;font-size:12.500px;line-height:15px;color:#ececec">学习</div>
<div class="a" style="left:1384px;top:91px;width:10px;height:7px;background:repeating-linear-gradient(to bottom,#c4c4c4 0 1px,transparent 1px 2px)"></div>
<div class="t" style="left:1030px;top:133px;width:370px;text-align:center;font-size:17px;line-height:22px;color:#f4f4f4">了解 Photoshop</div>
<div class="t" style="left:1030px;top:163px;width:370px;text-align:center;font-size:16px;line-height:21px;color:#f0f0f0;white-space:normal;padding-left:0px">在应用程序内直接提供的分步指导教程。从下<br>面选取一个主题开始教程。</div>
<div class="a" style="left:1040px;top:224px;width:352px;height:60px;background:#2e2e2e;border-radius:4px;overflow:hidden"><svg style="left:0;top:0;overflow:hidden" width="100" height="60" viewBox="0 0 100 60"><rect width="100" height="60" fill="#141832"/><g filter="url(#b1)"><rect x="0" y="0" width="100" height="9" fill="#12152e"/><path d="M0 60L16 42h72l12 18z" fill="#151a34"/><rect x="16" y="9" width="74" height="33" fill="#1f2648"/><path d="M0 6l16 4v32L0 56z" fill="#181d3a"/><path d="M100 8l-10 2v32l10 8z" fill="#1a1f3e"/><rect x="20" y="18.500" width="19" height="14.500" fill="#465280"/><rect x="21.500" y="20" width="7.500" height="11.500" fill="#0f132a"/><rect x="30.500" y="20" width="7.500" height="11.500" fill="#10152e"/><circle cx="33" cy="27" r="2" fill="#5a689a"/><rect x="44" y="16" width="5" height="29" fill="#0a0c1e"/><path d="M48.500 16.500l9.500-0.500v28.500h-9.500z" fill="#8896cc"/><path d="M48.500 34l9.500 0v10.500h-9.500z" fill="#a4b0e2"/><path d="M44 46h24l8 14H38z" fill="#343f7c"/><path d="M48 46h12l3 8H46z" fill="#4a58a0"/><rect x="63" y="16" width="8" height="17" fill="#2a2c52"/><ellipse cx="67" cy="24" rx="2.500" ry="5" fill="#3c3f66"/><circle cx="84" cy="22.500" r="4" fill="#4a5580"/><circle cx="76" cy="16.500" r="3" fill="#3d4770"/><circle cx="88.500" cy="17" r="2.200" fill="#4a4a58"/><path d="M68 41l10-3 22 8v14H76z" fill="#262e56"/><path d="M70 41l9-3 19 8-7 5z" fill="#465288"/><rect x="2" y="19" width="5" height="14" fill="#262e56"/><rect x="9" y="21.500" width="4" height="11" fill="#5563a0"/><rect x="17" y="38" width="22" height="9" fill="#0f1228"/><rect x="22" y="38" width="14" height="2" fill="#2c3560"/><circle cx="49.500" cy="5" r="1.700" fill="#c8d4ff"/></g><rect width="100" height="60" fill="#0a0c1c" opacity=".2"/><g fill="#6a78b0"><circle cx="21" cy="2" r=".400"/><circle cx="36" cy="5" r=".400"/><circle cx="60" cy="2.500" r=".400"/><circle cx="72" cy="5" r=".400"/><circle cx="86" cy="3" r=".400"/><circle cx="10" cy="6" r=".400"/></g></svg></div>
<div class="t" style="left:1155px;top:245px;font-size:16px;line-height:20px;color:#f2f2f2">基本技能</div>
<svg style="left:1366px;top:247px" width="9" height="14" viewBox="0 0 9 14"><path d="M0.700 0.700L7.700 7 0.700 13.300" fill="none" stroke="#e6e6e6" stroke-width="1.300"/></svg>
<div class="a" style="left:1040px;top:294px;width:352px;height:60px;background:#2e2e2e;border-radius:4px;overflow:hidden"><svg style="left:0;top:0;overflow:hidden" width="100" height="60" viewBox="0 0 100 60"><rect width="100" height="60" fill="#efeae6"/><g filter="url(#b1)"><rect x="70" y="0" width="30" height="60" fill="#f6e3df"/><ellipse cx="95" cy="20" rx="6" ry="9" fill="#f0a6a0"/><ellipse cx="88" cy="40" rx="8" ry="8" fill="#f4cfc6"/><rect x="0" y="10" width="25" height="9" fill="#e3cdb4"/><ellipse cx="6" cy="7" rx="4" ry="4" fill="#3a3432"/><path d="M30 8c8-6 30-6 40 0l2 40-44 2z" fill="#f4f3f3"/><path d="M40 0h26c2 5-1 8-4 9-2-4-8-4-12-1-5 0-9-3-10-8z" fill="#3b2a22"/><path d="M50 6h9l-3 9h-4z" fill="#e8c3a8"/><ellipse cx="37" cy="38" rx="4" ry="6" fill="#e8c0a0"/><rect x="0" y="55" width="100" height="5" fill="#dac9b2"/><rect x="0" y="55" width="12" height="5" fill="#f2efe9"/><ellipse cx="58" cy="30" rx="13" ry="10" fill="#55752f"/><ellipse cx="47" cy="33" rx="8" ry="8" fill="#7a2a55"/><ellipse cx="52" cy="40" rx="6" ry="5" fill="#5a2146"/><ellipse cx="74" cy="26" rx="4.500" ry="6" fill="#4d3f9a"/><ellipse cx="63" cy="22" rx="5" ry="4" fill="#c08aa0"/><ellipse cx="66" cy="42" rx="12" ry="9" fill="#e2992a"/><ellipse cx="60" cy="50" rx="8" ry="6" fill="#7c8d2e"/><ellipse cx="72" cy="48" rx="6" ry="5" fill="#e8a834"/><ellipse cx="10" cy="40" rx="8" ry="9" fill="#d98a2c"/><ellipse cx="16" cy="48" rx="9" ry="6" fill="#7c8b32"/><ellipse cx="19" cy="44" rx="4" ry="3" fill="#e6a030"/><ellipse cx="5" cy="47" rx="5" ry="5" fill="#58702c"/></g><g filter="url(#b0)"><circle cx="59.0" cy="38.9" r="1.6" fill="#e9a02c"/><circle cx="67.1" cy="39.5" r="1.2" fill="#efc85a"/><circle cx="65.4" cy="40.2" r="1.9" fill="#f0b83c"/><circle cx="59.2" cy="36.6" r="1.6" fill="#3f5a24"/><circle cx="60.7" cy="36.9" r="1.5" fill="#d9862a"/><circle cx="61.1" cy="38.3" r="1.2" fill="#f0b83c"/><circle cx="57.5" cy="35.9" r="1.8" fill="#f0b83c"/><circle cx="60.8" cy="37.3" r="1.7" fill="#7a2a55"/><circle cx="48.6" cy="34.8" r="1.6" fill="#9a3a6a"/><circle cx="60.0" cy="39.5" r="1.8" fill="#d9862a"/><circle cx="67.7" cy="29.8" r="1.9" fill="#9a3a6a"/><circle cx="66.9" cy="40.2" r="1.3" fill="#d9862a"/><circle cx="59.4" cy="37.0" r="1.2" fill="#efc85a"/><circle cx="48.9" cy="33.1" r="1.9" fill="#9a3a6a"/><circle cx="54.0" cy="33.9" r="2.3" fill="#f0b83c"/><circle cx="50.2" cy="38.5" r="2.4" fill="#5a2146"/><circle cx="61.9" cy="33.4" r="2.3" fill="#7f9638"/><circle cx="51.9" cy="47.8" r="2.1" fill="#7a2a55"/><circle cx="62.6" cy="39.5" r="1.7" fill="#7f9638"/><circle cx="63.0" cy="41.9" r="2.2" fill="#9a3a6a"/><circle cx="62.7" cy="34.1" r="2.4" fill="#7f9638"/><circle cx="57.7" cy="32.1" r="1.3" fill="#7a2a55"/><circle cx="61.6" cy="39.9" r="1.4" fill="#f0b83c"/><circle cx="66.3" cy="37.2" r="1.9" fill="#5d7a30"/><circle cx="59.2" cy="38.6" r="2.0" fill="#4d3f9a"/><circle cx="59.6" cy="30.6" r="2.1" fill="#efc85a"/><circle cx="55.3" cy="40.5" r="1.2" fill="#efc85a"/><circle cx="62.9" cy="38.2" r="1.2" fill="#e9a02c"/><circle cx="52.6" cy="33.9" r="1.9" fill="#5d7a30"/><circle cx="62.8" cy="38.2" r="2.3" fill="#d9862a"/><circle cx="54.3" cy="33.0" r="2.2" fill="#f0b83c"/><circle cx="67.0" cy="36.7" r="1.5" fill="#c98aa6"/><circle cx="66.9" cy="45.3" r="1.8" fill="#f0b83c"/><circle cx="64.0" cy="49.8" r="2.1" fill="#e9a02c"/><circle cx="57.1" cy="45.6" r="1.4" fill="#f0b83c"/><circle cx="58.3" cy="38.7" r="1.9" fill="#d9862a"/><circle cx="51.0" cy="29.8" r="2.2" fill="#7a2a55"/><circle cx="59.8" cy="33.8" r="1.7" fill="#4d3f9a"/><circle cx="58.2" cy="23.2" r="1.7" fill="#9a3a6a"/><circle cx="63.1" cy="44.9" r="2.3" fill="#d9862a"/><circle cx="57.8" cy="39.3" r="1.4" fill="#d9862a"/><circle cx="50.4" cy="28.1" r="1.5" fill="#5a2146"/><circle cx="52.2" cy="27.9" r="2.3" fill="#f0b83c"/><circle cx="62.3" cy="26.7" r="2.3" fill="#c98aa6"/><circle cx="51.3" cy="40.6" r="1.6" fill="#f0b83c"/><circle cx="48.4" cy="44.7" r="2.3" fill="#5a2146"/><circle cx="19.1" cy="36.6" r="2.2" fill="#f0b83c"/><circle cx="16.1" cy="40.3" r="1.7" fill="#f0b83c"/><circle cx="3.4" cy="48.4" r="1.8" fill="#6a3a5a"/><circle cx="13.5" cy="50.8" r="2.2" fill="#7f9638"/><circle cx="6.9" cy="49.7" r="1.3" fill="#e9a02c"/><circle cx="8.9" cy="38.3" r="1.4" fill="#f0b83c"/><circle cx="13.9" cy="49.0" r="2.1" fill="#e9a02c"/><circle cx="10.1" cy="42.2" r="2.0" fill="#f0b83c"/><circle cx="13.3" cy="48.9" r="1.2" fill="#f0b83c"/><circle cx="6.0" cy="43.2" r="1.9" fill="#7f9638"/><circle cx="15.2" cy="48.0" r="1.2" fill="#d9862a"/><circle cx="12.5" cy="47.1" r="1.1" fill="#f0b83c"/><circle cx="16.6" cy="43.6" r="1.9" fill="#7f9638"/><circle cx="5.1" cy="44.1" r="1.2" fill="#d9862a"/><circle cx="3.8" cy="35.8" r="1.7" fill="#7f9638"/><circle cx="18.2" cy="50.4" r="1.4" fill="#7f9638"/><circle cx="22.5" cy="44.9" r="1.8" fill="#d9862a"/><circle cx="12.0" cy="43.6" r="1.6" fill="#7f9638"/></g></svg></div>
<div class="t" style="left:1155px;top:315px;font-size:16px;line-height:20px;color:#f2f2f2">修复照片</div>
<svg style="left:1366px;top:317px" width="9" height="14" viewBox="0 0 9 14"><path d="M0.700 0.700L7.700 7 0.700 13.300" fill="none" stroke="#e6e6e6" stroke-width="1.300"/></svg>
<div class="a" style="left:1040px;top:364px;width:352px;height:60px;background:#2e2e2e;border-radius:4px;overflow:hidden"><svg style="left:0;top:0;overflow:hidden" width="100" height="60" viewBox="0 0 100 60"><rect width="100" height="60" fill="#4a3a34"/><g filter="url(#b1)"><rect x="0" y="0" width="30" height="10" fill="#6a6a64"/><rect x="0" y="9" width="21" height="36" fill="#1e1f20"/><rect x="2" y="14" width="17" height="8" fill="#3b4a52"/><rect x="2" y="26" width="17" height="8" fill="#2b3338"/><rect x="21" y="0" width="18" height="34" fill="#2c2624"/><path d="M24 30L27 2M28 31L33 0M31 32L30 4" stroke="#a8343a" stroke-width="1.400"/><path d="M26 30L23 6M34 31L36 3" stroke="#d8d0cc" stroke-width="1"/><ellipse cx="42" cy="5" rx="6" ry="6" fill="#8b1f24"/><path d="M36 30L52 2l5 2-16 29z" fill="#b77a4a"/><rect x="60" y="0" width="40" height="40" fill="#5a4238"/><rect x="64" y="4" width="24" height="32" fill="#3a2a22"/><rect x="67" y="8" width="17" height="24" fill="#c99a2e"/><ellipse cx="75.500" cy="21" rx="5" ry="9" fill="#b55a6a"/><rect x="92" y="0" width="8" height="18" fill="#d9c8b8"/><rect x="88" y="24" width="12" height="36" fill="#d6a874"/><path d="M0 45h24l10 15H0z" fill="#5f8a68"/><path d="M14 36l24-6 48 8-18 22H30z" fill="#ebe7df"/><path d="M13 40l2-3 20 18-2 3z" fill="#cfc9bd"/><ellipse cx="8" cy="53" rx="9" ry="5" fill="#c8c4b4"/><path d="M70 44l8 6-2 2-8-6z" fill="#c22a3a"/></g><path d="M53 14L69 38v22H37V38z" fill="#1d4f9b"/><path d="M53 24l12 17v19H41V41z" fill="#b4d0ec"/><path d="M53 18l8 12-4 2-4-3-4 3-3-2z" fill="#2a66b2"/><path d="M53 24l6 8-3 4-3-3-3 3-3-4z" fill="#f2f6fb"/><rect x="49" y="47" width="8" height="13" rx="3.500" fill="#2f86c9"/></svg></div>
<div class="t" style="left:1155px;top:385px;font-size:16px;line-height:20px;color:#f2f2f2">制作创意效果</div>
<svg style="left:1366px;top:387px" width="9" height="14" viewBox="0 0 9 14"><path d="M0.700 0.700L7.700 7 0.700 13.300" fill="none" stroke="#e6e6e6" stroke-width="1.300"/></svg>
<div class="a" style="left:1040px;top:434px;width:352px;height:60px;background:#2e2e2e;border-radius:4px;overflow:hidden"><svg style="left:0;top:0;overflow:hidden" width="100" height="60" viewBox="0 0 100 60"><rect width="100" height="60" fill="#d8151f"/><g filter="url(#b1)"><rect x="0" y="0" width="26" height="50" fill="#b07c3c"/><path d="M0 0h12l-4 30-8 10z" fill="#4a3018"/><ellipse cx="17" cy="12" rx="7" ry="6" fill="#c99654"/><rect x="0" y="30" width="26" height="20" fill="#6d4626"/><ellipse cx="8" cy="22" rx="6" ry="4" fill="#3e2814"/><ellipse cx="17" cy="34" rx="5" ry="4" fill="#7a5a48"/></g><rect x="26" y="0" width="10" height="52" fill="#e9c3c8"/><rect x="26" y="0" width="4" height="52" fill="#cdbf8e"/><rect x="30" y="0" width="6" height="52" fill="#e06070" opacity=".55"/><rect x="0" y="50" width="30" height="10" fill="#e8c9a0"/><path d="M2 52h8l-4 6zM12 58l4-6 4 6zM22 52h6l-3 6z" fill="#2d6fb0"/><path d="M10 52h6l-4 6zM18 58h-2l5-6 3 6z" fill="#e88a3a"/><rect x="30" y="52" width="6" height="8" fill="#5cc4c0"/><rect x="91" y="0" width="9" height="60" fill="#cfcf9a"/><rect x="93" y="0" width="4" height="60" fill="#e4b28c" opacity=".7"/><rect x="90" y="56" width="10" height="4" fill="#4f9a3c"/><g stroke="#b70f18" stroke-width=".600"><path d="M36 11h55M36 22h55M36 33h55M36 44h55M36 55h55"/></g><g filter="url(#b0)"><path d="M47 31.500C58 21 74 9 91 3v49c-8-1-15-3-22-6-8-3-17-7-22-14.500z" fill="#8793bb"/><path d="M54 28C65 19 79 11 91 6v31c-10 2-25-1-37-9z" fill="#c6cfe5"/><path d="M48 33.500c10 5 24 12 43 15.500v3c-14-3-30-9-43-18.500z" fill="#46507a"/><path d="M47.500 32.500c7 3 14 3.500 21 2" fill="none" stroke="#3a3f5e" stroke-width=".900"/></g><circle cx="67.500" cy="27" r="4.600" fill="#1c1410"/><circle cx="67.500" cy="27" r="3.600" fill="#e9dcae"/><circle cx="68" cy="27" r="2" fill="#1c1410"/><circle cx="54.500" cy="17.500" r="2" fill="#8fb0c8"/><circle cx="64.500" cy="0.500" r="2.300" fill="#7cc6c6"/></svg></div>
<div class="t" style="left:1155px;top:455px;font-size:16px;line-height:20px;color:#f2f2f2">绘画</div>
<svg style="left:1366px;top:457px" width="9" height="14" viewBox="0 0 9 14"><path d="M0.700 0.700L7.700 7 0.700 13.300" fill="none" stroke="#e6e6e6" stroke-width="1.300"/></svg>
<div class="a" style="left:1030px;top:530px;width:370px;height:1px;background:#383838"></div>
<div class="a" style="left:1030px;top:532px;width:370px;height:1px;background:#383838"></div>
<!-- libraries -->
<div class="phead" style="left:1030px;top:533px;width:370px;height:28px"></div>
<div class="a" style="left:1030px;top:560px;width:370px;height:1px;background:#383838"></div>
<div class="ptab" style="left:1030px;top:533px;width:40px;height:28px"></div>
<div class="a" style="left:1069px;top:533px;width:1px;height:27px;background:#383838"></div>
<div class="t" style="left:1039px;top:539.600px;font-size:12.500px;line-height:15px;color:#ececec">库</div>
<div class="a" style="left:1384px;top:543px;width:10px;height:7px;background:repeating-linear-gradient(to bottom,#c4c4c4 0 1px,transparent 1px 2px)"></div>
<div class="a" style="left:1038px;top:569px;width:298px;height:19px;background:#4b4b4b;border:1px solid #5e5e5e;border-radius:3px"></div>
<svg style="left:1323px;top:576px" width="8" height="5" viewBox="0 0 8 5"><path d="M0.500 0.500L4 4l3.500-3.500" fill="none" stroke="#747474" stroke-width="1.200"/></svg>
<div class="a" style="left:1343px;top:567px;width:23px;height:24px;background:#303030;border:1px solid #444;border-radius:3px"></div>
<svg style="left:1348px;top:572px" width="13" height="13" viewBox="0 0 13 13"><g fill="#e8e8e8"><rect width="6" height="6"/><rect x="7" width="6" height="6"/><rect y="7" width="6" height="6"/><rect x="7" y="7" width="6" height="6"/></g></svg>
<svg style="left:1374px;top:572px" width="12" height="13" viewBox="0 0 12 13"><g fill="#e8e8e8"><rect y="0" width="12" height="2"/><rect y="3.600" width="12" height="2"/><rect y="7.200" width="12" height="2"/><rect y="10.800" width="12" height="2"/></g></svg>
<svg style="left:1038px;top:601px" width="11" height="11" viewBox="0 0 11 11"><circle cx="6.500" cy="4.500" r="3.300" fill="none" stroke="#d6d6d6" stroke-width="1.500"/><path d="M4 7L1 10" stroke="#d6d6d6" stroke-width="1.800" stroke-linecap="round"/></svg>
<div class="t" style="left:1054px;top:600px;font-size:11.500px;line-height:14px;font-style:italic;color:#707070"><span style="display:inline-block;transform:skewX(-12deg)">搜索</span> Adobe Stock</div>
<svg style="left:1380px;top:604px" width="9" height="6" viewBox="0 0 9 6"><path d="M0.500 0.500L4.500 4.800 8.500 0.500" fill="none" stroke="#7a7a7a" stroke-width="1.200"/></svg>
<div class="a" style="left:1038px;top:617px;width:354px;height:1px;background:#5e5e5e"></div>
<div class="a" style="left:1030px;top:625px;width:370px;height:214px;background:#4b4b4b;border-top:1px solid #474747"></div>
<div class="a" style="left:1030px;top:838px;width:370px;height:1px;background:#474747"></div>
<div class="t" style="left:1333px;top:845px;font-size:12px;line-height:14px;color:#f0f0f0;letter-spacing:-0.300px">-- KB</div>
<svg style="left:1367px;top:845px" width="11" height="14" viewBox="0 0 11 14"><path d="M1.500 3.500h8v9.800h-8z" fill="none" stroke="#8a8a8a" stroke-width="1.200"/><path d="M0 2.800h11M4 1h3" stroke="#8a8a8a" stroke-width="1.300"/><path d="M4 5.500v6M5.500 5.500v6M7 5.500v6" stroke="#8a8a8a" stroke-width=".800"/></svg>
<!--MENU-->
<div class="a" id="fmenu" style="left:365px;top:25px;width:250px;height:470px;background:#f0f0f0;border:1px solid #a0a0a0;box-shadow:2px 2px 3px rgba(0,0,0,.35)">
<div class="mt" style="top:5px;color:#9d9d9d">上次滤镜操作<span class="l">(F)</span></div><div class="ms" style="top:5px;color:#9d9d9d">Alt+Ctrl+F</div>
<div class="a" style="left:3px;top:28px;width:243px;height:1px;background:#a8a8a8"></div>
<div class="mt" style="top:37px;color:#1a1a1a">转换为智能滤镜<span class="l">(S)</span></div>
<div class="a" style="left:3px;top:60px;width:243px;height:1px;background:#a8a8a8"></div>
<div class="mt" style="top:69px;color:#1a1a1a">滤镜库<span class="l">(G)...</span></div>
<div class="mt" style="top:90px;color:#1a1a1a">自适应广角<span class="l">(A)...</span></div><div class="ms" style="top:90px;color:#1a1a1a">Alt+Shift+Ctrl+A</div>
<div class="mt" style="top:111px;color:#1a1a1a"><span class="l" style="letter-spacing:.3px">Camera Raw </span>滤镜<span class="l">(C)...</span></div><div class="ms" style="top:111px;color:#1a1a1a">Shift+Ctrl+A</div>
<div class="mt" style="top:132px;color:#1a1a1a">镜头校正<span class="l">(R)...</span></div><div class="ms" style="top:132px;color:#1a1a1a">Shift+Ctrl+R</div>
<div class="mt" style="top:153px;color:#1a1a1a">液化<span class="l">(L)...</span></div><div class="ms" style="top:153px;color:#1a1a1a">Shift+Ctrl+X</div>
<div class="mt" style="top:174px;color:#1a1a1a">消失点<span class="l">(V)...</span></div><div class="ms" style="top:174px;color:#1a1a1a">Alt+Ctrl+V</div>
<div class="a" style="left:3px;top:197px;width:243px;height:1px;background:#a8a8a8"></div>
<div class="mt" style="top:207px;color:#1a1a1a"><span class="l">3D</span></div><svg style="left:237px;top:209px" width="6" height="10" viewBox="0 0 6 10"><path d="M0 0L6 5 0 10z" fill="#111"/></svg>
<div class="mt" style="top:228px;color:#1a1a1a">风格化</div><svg style="left:237px;top:230px" width="6" height="10" viewBox="0 0 6 10"><path d="M0 0L6 5 0 10z" fill="#111"/></svg>
<div class="mt" style="top:249px;color:#1a1a1a">模糊</div><svg style="left:237px;top:251px" width="6" height="10" viewBox="0 0 6 10"><path d="M0 0L6 5 0 10z" fill="#111"/></svg>
<div class="mt" style="top:270px;color:#1a1a1a">模糊画廊</div><svg style="left:237px;top:272px" width="6" height="10" viewBox="0 0 6 10"><path d="M0 0L6 5 0 10z" fill="#111"/></svg>
<div class="mt" style="top:291px;color:#1a1a1a">扭曲</div><svg style="left:237px;top:293px" width="6" height="10" viewBox="0 0 6 10"><path d="M0 0L6 5 0 10z" fill="#111"/></svg>
<div class="mt" style="top:312px;color:#1a1a1a">锐化</div><svg style="left:237px;top:314px" width="6" height="10" viewBox="0 0 6 10"><path d="M0 0L6 5 0 10z" fill="#111"/></svg>
<div class="mt" style="top:333px;color:#1a1a1a">视频</div><svg style="left:237px;top:335px" width="6" height="10" viewBox="0 0 6 10"><path d="M0 0L6 5 0 10z" fill="#111"/></svg>
<div class="mt" style="top:354px;color:#1a1a1a">像素化</div><svg style="left:237px;top:356px" width="6" height="10" viewBox="0 0 6 10"><path d="M0 0L6 5 0 10z" fill="#111"/></svg>
<div class="mt" style="top:375px;color:#1a1a1a">渲染</div><svg style="left:237px;top:377px" width="6" height="10" viewBox="0 0 6 10"><path d="M0 0L6 5 0 10z" fill="#111"/></svg>
<div class="mt" style="top:396px;color:#1a1a1a">杂色</div><svg style="left:237px;top:398px" width="6" height="10" viewBox="0 0 6 10"><path d="M0 0L6 5 0 10z" fill="#111"/></svg>
<div class="mt" style="top:417px;color:#1a1a1a">其它</div><svg style="left:237px;top:419px" width="6" height="10" viewBox="0 0 6 10"><path d="M0 0L6 5 0 10z" fill="#111"/></svg>
<div class="a" style="left:3px;top:439px;width:243px;height:1px;background:#a8a8a8"></div>
<div class="a" style="left:2px;top:446px;width:242px;height:21px;background:#0078d7"></div>
<div class="mt" style="top:448px;color:#fff"><span class="l" style="letter-spacing:.4px">Topaz Labs</span></div><svg style="left:237px;top:450px" width="6" height="10" viewBox="0 0 6 10"><path d="M0 0L6 5 0 10z" fill="#fff"/></svg>
</div>
<div class="a" style="left:609px;top:468px;width:181px;height:26px;background:#eef7fb;border:1px solid #a8b0b6;box-shadow:2px 2px 3px rgba(0,0,0,.35)"></div>
<div class="a" style="left:612px;top:470.500px;width:176px;height:21px;background:#0078d7"></div>
<div class="t" style="left:629.500px;top:475px;font-size:12px;line-height:15px;color:#fff;letter-spacing:.45px">Topaz Texture Effects 2...</div>
<!--ANNOT-->
<div class="a" style="left:367px;top:-5px;width:48px;height:37px;border:3px solid #e8251b;border-radius:4px"></div>
<div class="a" style="left:369px;top:456px;width:425px;height:52px;border:3px solid #e8251b;border-radius:5px"></div>
<div class="t" style="left:618px;top:817px;font-size:22px;line-height:26px;font-weight:bold;color:#8b0000;letter-spacing:.8px">www.dgrai.com</div>
</body>
</html>
